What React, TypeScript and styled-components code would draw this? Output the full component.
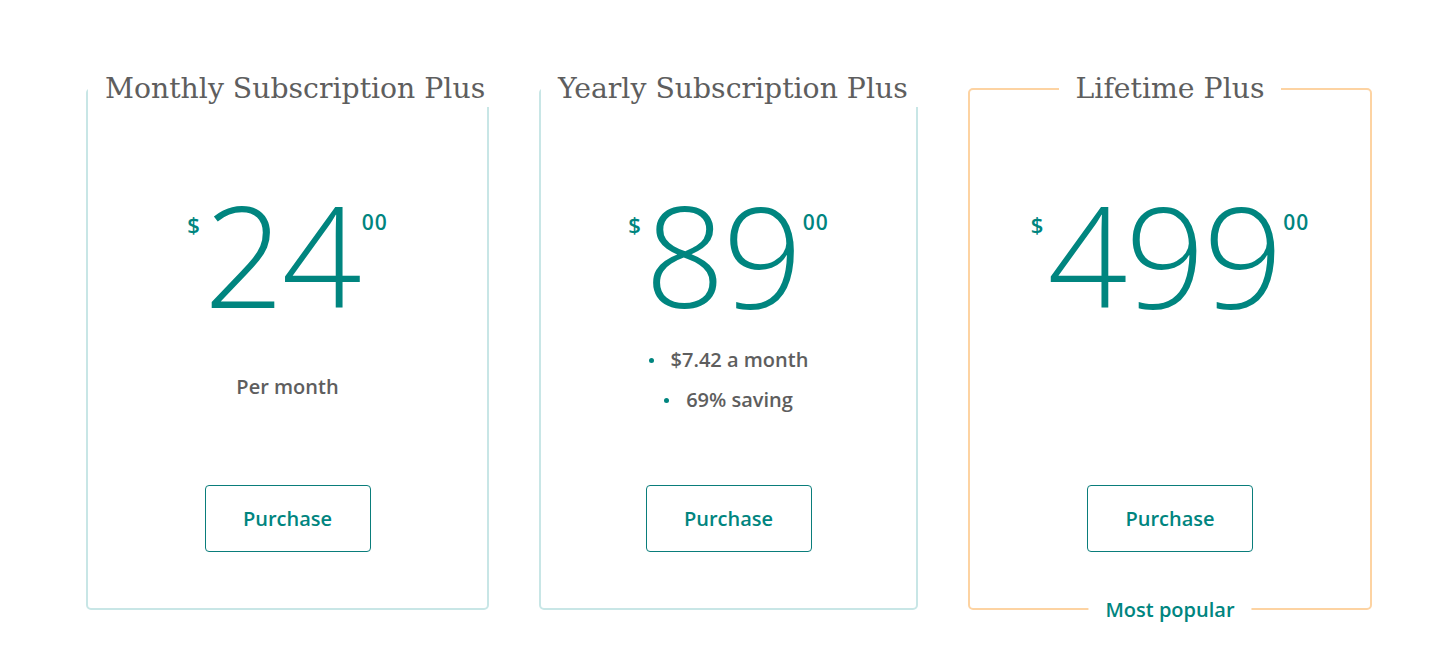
import React from "react";
import styled, { createGlobalStyle } from "styled-components";

const GlobalStyle = createGlobalStyle`
  html, body { margin: 0; padding: 0; background: #ffffff; }
  body { font-family: "Open Sans", "Liberation Sans", sans-serif; }
`;

const TEAL = "#00857f";
const GREY = "#5e5e5e";

const Page = styled.main`
  box-sizing: border-box;
  min-height: 662px;
  display: flex;
  align-items: flex-start;
  gap: 50px;
  padding: 70px 0 40px 86px;
`;

const CardWrap = styled.div<{ $w: number }>`
  position: relative;
  width: ${(p) => p.$w}px;
`;

const Card = styled.fieldset<{ $accent: string }>`
  box-sizing: border-box;
  width: 100%;
  min-width: 0;
  margin: 0;
  padding: 0 0 56px;
  border: 2px solid ${(p) => p.$accent};
  border-radius: 5px;
`;

const Title = styled.legend`
  margin: 0 auto;
  padding: 0 17px;
  background: #ffffff;
  font-family: "DejaVu Serif", "Liberation Serif", serif;
  font-size: 28.3px;
  font-weight: 400;
  line-height: 37px;
  color: ${GREY};
  white-space: nowrap;
`;

const Body = styled.div`
  display: flex;
  flex-direction: column;
  align-items: center;
`;

const PriceRow = styled.div`
  display: flex;
  align-items: flex-start;
  justify-content: center;
  margin-top: 72px;
  color: ${TEAL};
`;

const Currency = styled.span`
  font-size: 22px;
  font-weight: 600;
  line-height: 1;
  margin-top: 34px;
  margin-right: 4px;
`;

const Amount = styled.span`
  font-size: 140px;
  font-weight: 300;
  line-height: 150px;
  letter-spacing: -2px;
`;

const Cents = styled.span`
  font-size: 21px;
  font-weight: 600;
  line-height: 1;
  margin-top: 33px;
  margin-left: 2px;
  letter-spacing: 1px;
`;

const Details = styled.div<{ $offset: number }>`
  height: 156px;
  box-sizing: border-box;
  padding-top: ${(p) => p.$offset}px;
`;

const Note = styled.p`
  margin: 0;
  font-size: 20px;
  font-weight: 600;
  line-height: 40px;
  color: ${GREY};
  text-align: center;
`;

const Bullets = styled.ul`
  margin: 0;
  padding: 0;
  list-style: none;
  display: flex;
  flex-direction: column;
  align-items: center;
`;

const Bullet = styled.li`
  display: flex;
  align-items: center;
  font-size: 20px;
  font-weight: 600;
  line-height: 40px;
  color: ${GREY};

  &::before {
    content: "";
    width: 5px;
    height: 5px;
    border-radius: 50%;
    background: ${TEAL};
    margin-right: 17px;
  }
`;

const Button = styled.button`
  box-sizing: border-box;
  width: 166px;
  height: 67px;
  background: #ffffff;
  border: 1px solid #0a7d7b;
  border-radius: 4px;
  font-family: "Open Sans", "Liberation Sans", sans-serif;
  font-size: 20px;
  font-weight: 600;
  color: ${TEAL};
  cursor: pointer;
`;

const Badge = styled.span`
  position: absolute;
  left: 50%;
  bottom: -13px;
  transform: translateX(-50%);
  padding: 0 17px;
  background: #ffffff;
  font-size: 20px;
  font-weight: 600;
  line-height: 26px;
  color: ${TEAL};
  white-space: nowrap;
`;

type Plan = {
  title: string;
  width: number;
  accent: string;
  amount: string;
  offset: number;
  note?: string;
  bullets?: string[];
  badge?: string;
};

const plans: Plan[] = [
  { title: "Monthly Subscription Plus", width: 403, accent: "#c8e6e6", amount: "24", offset: 38, note: "Per month" },
  { title: "Yearly Subscription Plus", width: 379, accent: "#c8e6e6", amount: "89", offset: 11, bullets: ["$7.42 a month", "69% saving"] },
  { title: "Lifetime Plus", width: 404, accent: "#fdd3a2", amount: "499", offset: 0, badge: "Most popular" },
];

export default function App() {
  return (
    <>
      <GlobalStyle />
      <Page>
        {plans.map((p) => (
          <CardWrap key={p.title} $w={p.width}>
            <Card $accent={p.accent}>
              <Title>{p.title}</Title>
              <Body>
                <PriceRow>
                  <Currency>$</Currency>
                  <Amount>{p.amount}</Amount>
                  <Cents>00</Cents>
                </PriceRow>
                <Details $offset={p.offset}>
                  {p.note && <Note>{p.note}</Note>}
                  {p.bullets && (
                    <Bullets>
                      {p.bullets.map((b) => (
                        <Bullet key={b}>{b}</Bullet>
                      ))}
                    </Bullets>
                  )}
                </Details>
                <Button>Purchase</Button>
              </Body>
            </Card>
            {p.badge && <Badge>{p.badge}</Badge>}
          </CardWrap>
        ))}
      </Page>
    </>
  );
}
